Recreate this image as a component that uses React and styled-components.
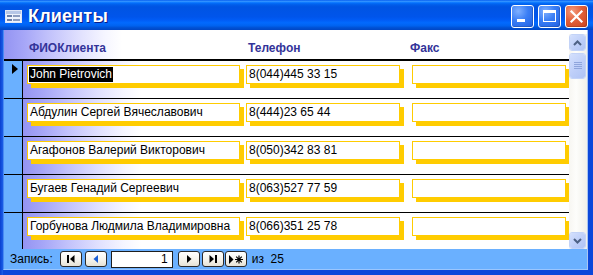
import React from 'react';
import styled, { createGlobalStyle } from 'styled-components';

const Global = createGlobalStyle`
  html, body { margin: 0; padding: 0; background: #ffffff; }
  body { font-family: "Liberation Sans", Arial, sans-serif; }
  #root { width: 593px; height: 275px; }
`;

const Window = styled.div`
  width: 593px;
  height: 275px;
  display: flex;
  flex-direction: column;
  overflow: hidden;
  background: #0b47da;
`;

const TitleBar = styled.div`
  flex: none;
  height: 30px;
  display: flex;
  align-items: center;
  padding: 0 5px 0 5px;
  box-sizing: border-box;
  background: linear-gradient(to bottom, #0058ee 0%, #3593ff 4%, #288eff 6%, #127dff 8%, #036ffc 10%, #0262ee 14%, #0057e5 20%, #0054e3 24%, #0055eb 56%, #005bf5 66%, #026afe 76%, #0062ef 86%, #0052d6 92%, #0046c4 100%);
`;

const TitleIcon = styled.svg`
  flex: none;
  width: 17px;
  height: 13px;
  margin: 3px 6px 0 0;
`;

const TitleText = styled.div`
  flex: 1;
  color: #ffffff;
  font-weight: bold;
  font-size: 18px;
  letter-spacing: 0.2px;
  text-shadow: 1px 1px 0 #0a1b86;
  padding-top: 2px;
`;

const CaptionButtons = styled.div`
  display: flex;
  gap: 4px;
  padding-top: 3px;
`;

const CaptionButton = styled.div`
  width: 23px;
  height: 23px;
  box-sizing: border-box;
  border: 1px solid #ffffff;
  border-radius: 3px;
  display: flex;
  align-items: center;
  justify-content: center;
  background: ${p => p.$close
    ? 'radial-gradient(circle at 30% 25%, #f39a7c 0%, #e2603a 45%, #c9421c 100%)'
    : 'radial-gradient(circle at 30% 25%, #7fb0ff 0%, #3a7ef5 45%, #1f5fe2 100%)'};
  box-shadow: inset -1px -1px 0 rgba(0, 0, 0, 0.15);
`;

const Frame = styled.div`
  flex: 1;
  display: flex;
  min-height: 0;
  padding: 0 5px 5px 3px;
  background: linear-gradient(to right, #0a3fd0 0, #1a5fe8 3px, #0b47da 3px);
`;

const Client = styled.div`
  flex: 1;
  display: flex;
  flex-direction: column;
  min-width: 0;
  border-left: 1px solid #4a8af2;
  border-right: 1px solid #a9c4f2;
  border-bottom: 1px solid #9ac6ff;
  background: #ffffff;
`;

const FormArea = styled.div`
  height: 219px;
  flex: none;
  display: flex;
  overflow: hidden;
`;

const Sheet = styled.div`
  flex: 1;
  display: flex;
  flex-direction: column;
  min-width: 0;
`;

const bgGradient = 'linear-gradient(to right, #9494f2 0px, #a6a6f7 20px, #c2c2fb 45px, #e0e0fe 75px, #f5f5ff 100px, #ffffff 118px)';

const Header = styled.div`
  flex: none;
  height: 31px;
  display: flex;
  padding: 11px 0 0 25px;
  box-sizing: border-box;
  background: ${bgGradient};
  border-bottom: 2px solid #000000;
`;

const HeaderLabel = styled.div`
  width: ${p => p.$w}px;
  flex: none;
  font-size: 12px;
  font-weight: bold;
  color: #333399;
  line-height: 14px;
`;

const Row = styled.div`
  flex: none;
  height: 37px;
  display: flex;
  border-bottom: 1px solid #000000;
`;

const Selector = styled.div`
  flex: none;
  width: 19px;
  box-sizing: border-box;
  border-right: 1px solid #000000;
  background: #6ab0ff;
  padding: 3px 0 0 8px;
`;

const Pointer = styled.div`
  width: 0;
  height: 0;
  border-left: 6px solid #000000;
  border-top: 5px solid transparent;
  border-bottom: 5px solid transparent;
`;

const RowBody = styled.div`
  flex: 1;
  display: flex;
  padding: 4px 0 0 4px;
  background: ${bgGradient};
`;

const Field = styled.div`
  flex: none;
  width: ${p => p.$w}px;
  height: 19px;
  margin-left: ${p => p.$gap}px;
  box-sizing: border-box;
  border: 1px solid #ffcc00;
  box-shadow: 4px 4px 0 #ffcc00;
  background: #ffffff;
  padding-left: 2px;
  font-size: 12px;
  line-height: 17px;
  color: #000000;
  white-space: nowrap;
  overflow: visible;
`;

const Selected = styled.span`
  display: inline-block;
  margin-left: -1px;
  padding: 0 1px;
  line-height: 15px;
  background: #000000;
  color: #ffffff;
`;

const ScrollColumn = styled.div`
  flex: none;
  width: 18px;
  padding-top: 4px;
  display: flex;
  flex-direction: column;
  background: #ffffff;
`;

const ScrollTrack = styled.div`
  flex: 1;
  display: flex;
  flex-direction: column;
  justify-content: space-between;
  background: linear-gradient(to right, #f7f6f2, #fdfdfb 40%, #f0efe9);
`;

const ScrollButton = styled.div`
  width: 17px;
  height: ${p => p.$h || 17}px;
  margin-top: ${p => p.$mt || 0}px;
  box-sizing: border-box;
  border: 1px solid #ffffff;
  border-radius: 3px;
  outline: 1px solid #c3d3f7;
  outline-offset: -1px;
  display: flex;
  align-items: center;
  justify-content: center;
  background: linear-gradient(135deg, #d4e0fd 0%, #bccdf8 60%, #b0c4f4 100%);
`;

const ScrollTop = styled.div`
  display: flex;
  flex-direction: column;
`;

const NavBar = styled.div`
  flex: none;
  height: 20px;
  display: flex;
  align-items: center;
  padding-left: 6px;
  background: #6ab0ff;
  font-size: 12px;
  color: #000000;
`;

const NavLabel = styled.span`
  margin-right: 7px;
`;

const NavButton = styled.div`
  flex: none;
  width: 22px;
  height: 16px;
  margin-right: ${p => p.$mr ?? 2}px;
  box-sizing: border-box;
  border: 1px solid #2a2a2a;
  border-radius: 3px;
  background: linear-gradient(to bottom, #ffffff, #f4f2ea 60%, #e6e2d6);
  display: flex;
  align-items: center;
  justify-content: center;
`;

const RecordInput = styled.div`
  flex: none;
  width: 62px;
  height: 17px;
  margin: 0 5px 0 2px;
  box-sizing: border-box;
  border: 1px solid #1e1e1e;
  background: #ffffff;
  text-align: right;
  padding-right: 4px;
  font-size: 12px;
  line-height: 15px;
`;

const NavCount = styled.span`
  margin-left: 5px;
`;

const rows = [
  { name: 'John Pietrovich', phone: '8(044)445 33 15', current: true },
  { name: 'Абдулин Сергей Вячеславович', phone: '8(444)23 65 44' },
  { name: 'Агафонов Валерий Викторович', phone: '8(050)342 83 81' },
  { name: 'Бугаев Генадий Сергеевич', phone: '8(063)527 77 59' },
  { name: 'Горбунова Людмила Владимировна', phone: '8(066)351 25 78' },
];

const Chevron = ({ up }) => (
  <svg width="9" height="6" viewBox="0 0 9 6">
    <path d={up ? 'M1 5 L4.5 1.5 L8 5' : 'M1 1 L4.5 4.5 L8 1'} fill="none" stroke="#4d6185" strokeWidth="2" />
  </svg>
);

export default function App() {
  return (
    <>
      <Global />
      <Window>
        <TitleBar>
          <TitleIcon viewBox="0 0 17 13">
            <rect x="0.5" y="0.5" width="16" height="12" fill="#eef2fb" stroke="#dfe6f6" />
            <rect x="1" y="1" width="15" height="3" fill="#b6c6e6" />
            <rect x="2" y="5" width="5" height="2" fill="#6b7fa8" />
            <rect x="8" y="5" width="7" height="2" fill="#8c9cbf" />
            <rect x="2" y="9" width="5" height="2" fill="#6b7fa8" />
            <rect x="8" y="9" width="7" height="2" fill="#8c9cbf" />
          </TitleIcon>
          <TitleText>Клиенты</TitleText>
          <CaptionButtons>
            <CaptionButton>
              <svg width="21" height="21" viewBox="0 0 21 21">
                <rect x="5" y="13" width="8" height="3" fill="#ffffff" />
              </svg>
            </CaptionButton>
            <CaptionButton>
              <svg width="21" height="21" viewBox="0 0 21 21">
                <rect x="4.5" y="4.5" width="12" height="11" fill="none" stroke="#ffffff" strokeWidth="1" />
                <rect x="4" y="4" width="13" height="3" fill="#ffffff" />
              </svg>
            </CaptionButton>
            <CaptionButton $close>
              <svg width="21" height="21" viewBox="0 0 21 21">
                <path d="M5.5 5.5 L15.5 15.5 M15.5 5.5 L5.5 15.5" stroke="#ffffff" strokeWidth="2.2" strokeLinecap="square" />
              </svg>
            </CaptionButton>
          </CaptionButtons>
        </TitleBar>
        <Frame>
          <Client>
            <FormArea>
              <Sheet>
                <Header>
                  <HeaderLabel $w={219}>ФИОКлиента</HeaderLabel>
                  <HeaderLabel $w={162}>Телефон</HeaderLabel>
                  <HeaderLabel $w={100}>Факс</HeaderLabel>
                </Header>
                {rows.map((r, i) => (
                  <Row key={i}>
                    <Selector>{r.current && <Pointer />}</Selector>
                    <RowBody>
                      <Field $w={213} $gap={0}>
                        {r.current ? <Selected>{r.name}</Selected> : r.name}
                      </Field>
                      <Field $w={154} $gap={6}>{r.phone}</Field>
                      <Field $w={154} $gap={12} />
                    </RowBody>
                  </Row>
                ))}
              </Sheet>
              <ScrollColumn>
                <ScrollTrack>
                  <ScrollTop>
                    <ScrollButton><Chevron up /></ScrollButton>
                    <ScrollButton $h={26} $mt={2}>
                      <svg width="8" height="8" viewBox="0 0 8 8">
                        <path d="M0 0.5 H8 M0 2.5 H8 M0 4.5 H8 M0 6.5 H8" stroke="#8fa5dc" strokeWidth="1" />
                      </svg>
                    </ScrollButton>
                  </ScrollTop>
                  <ScrollButton><Chevron /></ScrollButton>
                </ScrollTrack>
              </ScrollColumn>
            </FormArea>
            <NavBar>
              <NavLabel>Запись:</NavLabel>
              <NavButton $mr={3}>
                <svg width="12" height="10" viewBox="0 0 12 10">
                  <rect x="2" y="1" width="2" height="8" fill="#000" />
                  <path d="M9.5 1 L5 5 L9.5 9 Z" fill="#000" />
                </svg>
              </NavButton>
              <NavButton $mr={2}>
                <svg width="12" height="10" viewBox="0 0 12 10">
                  <path d="M8 1 L3.5 5 L8 9 Z" fill="#1c5fd6" />
                </svg>
              </NavButton>
              <RecordInput>1</RecordInput>
              <NavButton $mr={2}>
                <svg width="12" height="10" viewBox="0 0 12 10">
                  <path d="M4 1 L8.5 5 L4 9 Z" fill="#000" />
                </svg>
              </NavButton>
              <NavButton $mr={1}>
                <svg width="12" height="10" viewBox="0 0 12 10">
                  <path d="M2.5 1 L7 5 L2.5 9 Z" fill="#000" />
                  <rect x="8" y="1" width="2" height="8" fill="#000" />
                </svg>
              </NavButton>
              <NavButton $mr={0}>
                <svg width="16" height="11" viewBox="0 0 16 11">
                  <path d="M1 1 L5.5 5.5 L1 10 Z" fill="#000" />
                  <path d="M11 1.5 V9.5 M7 5.5 H15 M8.2 2.7 L13.8 8.3 M13.8 2.7 L8.2 8.3" stroke="#000" strokeWidth="1.2" />
                </svg>
              </NavButton>
              <NavCount>из&nbsp;&nbsp;25</NavCount>
            </NavBar>
          </Client>
        </Frame>
      </Window>
    </>
  );
}
